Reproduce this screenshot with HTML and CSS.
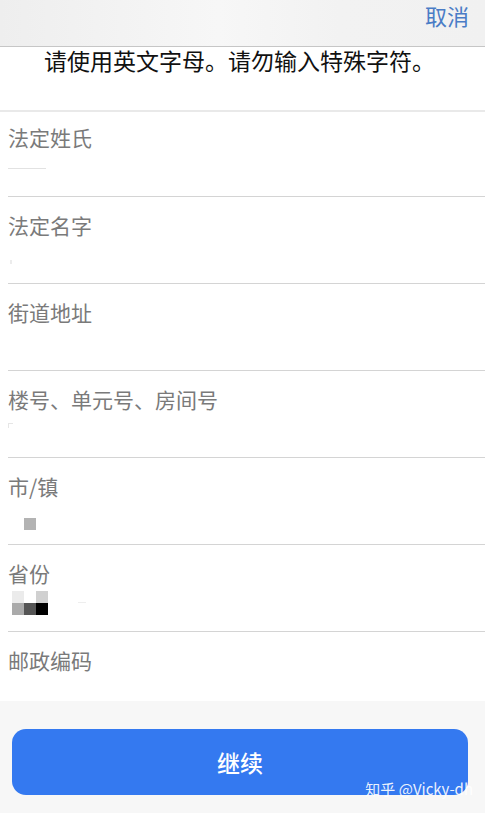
FILE: index.html
```html
<!DOCTYPE html>
<html lang="zh-CN">
<head>
<meta charset="utf-8">
<title>地址</title>
<link rel="stylesheet" href="styles.css">
</head>
<body>
<div class="page">
  <header class="topbar">
    <span class="cancel">取消</span>
  </header>
  <main class="content">
    <p class="hint">请使用英文字母。请勿输入特殊字符。</p>
    <div class="band"></div>
    <div class="field field--first">
      <div class="label">法定姓氏</div>
      <div class="value"><span class="faint-line"></span></div>
    </div>
    <div class="field">
      <div class="label">法定名字</div>
      <div class="value"><span class="faint-dot faint-dot--a"></span></div>
    </div>
    <div class="field">
      <div class="label">街道地址</div>
      <div class="value"></div>
    </div>
    <div class="field">
      <div class="label">楼号、单元号、房间号</div>
      <div class="value"><span class="faint-corner"></span></div>
    </div>
    <div class="field">
      <div class="label">市/镇</div>
      <div class="value">
        <div class="mosaic mosaic--city">
          <span class="px px-blank"></span><span class="px px-b3"></span>
        </div>
      </div>
    </div>
    <div class="field">
      <div class="label">省份</div>
      <div class="value">
        <div class="mosaic mosaic--prov">
          <span class="px px-eb"></span><span class="px px-blank"></span><span class="px px-d0"></span>
          <span class="px px-aa"></span><span class="px px-55"></span><span class="px px-00"></span>
        </div>
        <span class="faint-dash"></span>
      </div>
    </div>
    <div class="field">
      <div class="label">邮政编码</div>
      <div class="value"></div>
    </div>
  </main>
  <footer class="footer">
    <button class="continue" type="button">继续</button>
    <span class="watermark">知乎 @Vicky-dh</span>
  </footer>
</div>
</body>
</html>
```

FILE: styles.css
```css
html, body {
  margin: 0;
  padding: 0;
  background: #ffffff;
}

body {
  font-family: "Noto Sans CJK SC", "Noto Sans", sans-serif;
}

.page {
  width: 485px;
  height: 813px;
  display: flex;
  flex-direction: column;
  overflow: hidden;
}

.topbar {
  height: 47px;
  flex: none;
  border-bottom: 1px solid #c6c6c6;
  background: linear-gradient(90deg, #eeeeee 0%, #f3f3f3 25%, #f7f7f7 45%, #f2f2f2 70%, #f1f1f1 100%);
  display: flex;
  justify-content: flex-end;
  align-items: flex-start;
  padding: 2px 16px 0 0;
  box-sizing: border-box;
}

.cancel {
  color: #4a7cc6;
  font-size: 22px;
  line-height: 26px;
}

.content {
  flex: 1;
  min-height: 0;
  display: flex;
  flex-direction: column;
}

.hint {
  flex: none;
  margin: 0;
  height: 63px;
  padding: 0 6px 0 0;
  box-sizing: border-box;
  text-align: center;
  font-size: 23px;
  line-height: 26px;
  color: #111111;
}

.band {
  height: 2px;
  flex: none;
  background: #e9e9e9;
}

.field {
  flex: none;
  height: 87px;
  margin-left: 8px;
  border-bottom: 1px solid #d4d4d4;
  display: flex;
  flex-direction: column;
  padding-top: 15px;
  box-sizing: border-box;
}

.field--first {
  height: 85px;
  padding-top: 12px;
}

.label {
  font-size: 21px;
  line-height: 26px;
  color: #7a7a7a;
}

.value {
  position: relative;
  flex: 1;
}

.faint-line {
  position: absolute;
  left: 0;
  top: 18px;
  width: 38px;
  height: 1px;
  background: #e2e2e2;
}

.faint-dot {
  position: absolute;
  width: 2px;
  height: 4px;
  background: #ececec;
}

.faint-dot--a {
  left: 2px;
  top: 22px;
}

.faint-corner {
  position: absolute;
  left: 0;
  top: 11px;
  width: 4px;
  height: 4px;
  border-left: 1px solid #e6e6e6;
  border-top: 1px solid #e6e6e6;
}

.faint-dash {
  position: absolute;
  left: 70px;
  top: 16px;
  width: 8px;
  height: 1px;
  background: #eeeeee;
}

.mosaic {
  display: grid;
  grid-auto-rows: 12px;
}

.mosaic--city {
  margin-top: 19px;
  margin-left: 4px;
  grid-template-columns: repeat(2, 12px);
}

.mosaic--prov {
  margin-top: 5px;
  margin-left: 4px;
  grid-template-columns: repeat(3, 12px);
}

.px-blank { background: transparent; }
.px-b3 { background: #b3b3b3; }
.px-eb { background: #ebebeb; }
.px-d0 { background: #d0d0d0; }
.px-aa { background: #aaaaaa; }
.px-55 { background: #555555; }
.px-00 { background: #000000; }

.footer {
  position: relative;
  z-index: 1;
  flex: none;
  height: 112px;
  background: #f7f7f7;
  padding: 28px 17px 18px 12px;
  box-sizing: border-box;
}

.continue {
  display: block;
  width: 100%;
  height: 66px;
  border: none;
  border-radius: 14px;
  background: #3479f0;
  color: #ffffff;
  font-family: "Noto Sans CJK SC", "Noto Sans", sans-serif;
  font-size: 23px;
  font-weight: 500;
  padding: 0;
}

.watermark {
  position: absolute;
  right: 12px;
  bottom: 15px;
  color: rgba(255, 255, 255, 0.92);
  font-size: 15px;
  line-height: 19px;
}
```
